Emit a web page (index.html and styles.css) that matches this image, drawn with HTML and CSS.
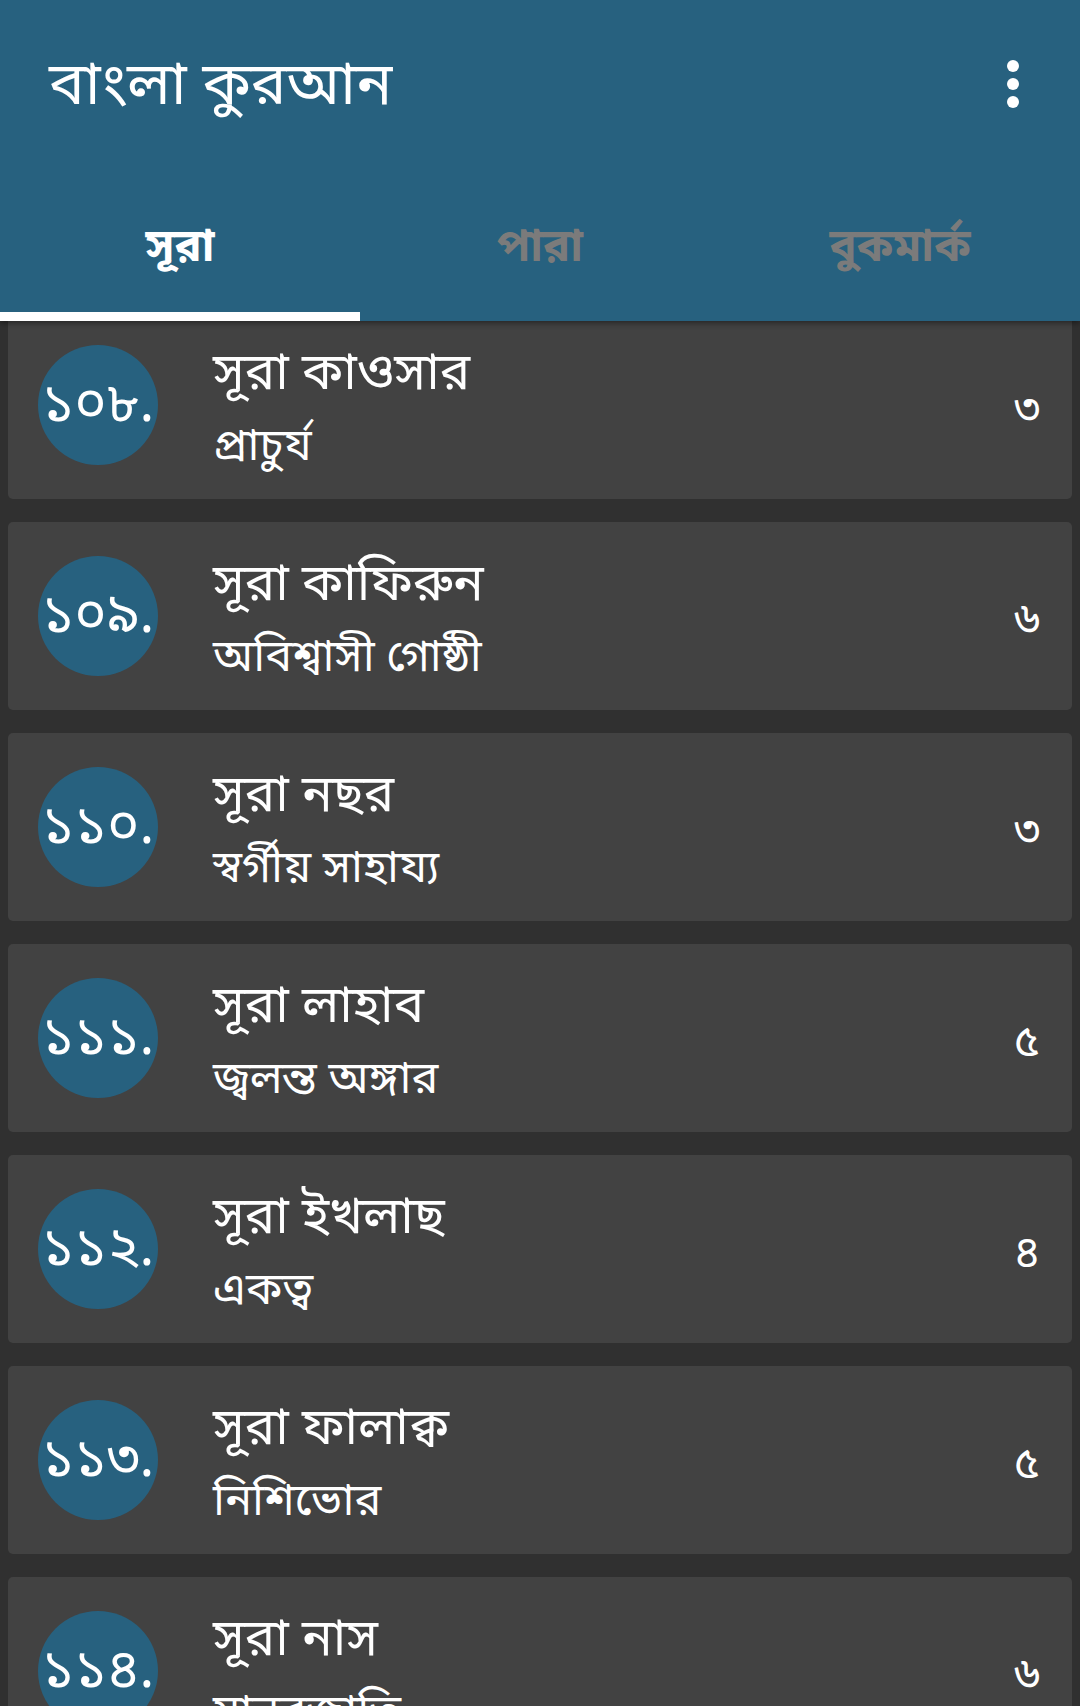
FILE: index.html
```html
<!DOCTYPE html>
<html lang="bn">
<head>
<meta charset="utf-8">
<title>বাংলা কুরআন</title>
<link rel="stylesheet" href="styles.css">
</head>
<body>
<div class="app">
  <header class="appbar">
    <div class="toolbar">
      <h1 class="title">বাংলা কুরআন</h1>
      <div class="menu" aria-label="menu">
        <span class="dot"></span><span class="dot"></span><span class="dot"></span>
      </div>
    </div>
    <nav class="tabs">
      <div class="tab active">সূরা</div>
      <div class="tab">পারা</div>
      <div class="tab">বুকমার্ক</div>
    </nav>
  </header>
  <main class="list">
    <div class="list-inner">
      <div class="card">
        <div class="num">১০৮.</div>
        <div class="texts"><div class="name">সূরা কাওসার</div><div class="meaning">প্রাচুর্য</div></div>
        <div class="count">৩</div>
      </div>
      <div class="card">
        <div class="num">১০৯.</div>
        <div class="texts"><div class="name">সূরা কাফিরুন</div><div class="meaning">অবিশ্বাসী গোষ্ঠী</div></div>
        <div class="count">৬</div>
      </div>
      <div class="card">
        <div class="num">১১০.</div>
        <div class="texts"><div class="name">সূরা নছর</div><div class="meaning">স্বর্গীয় সাহায্য</div></div>
        <div class="count">৩</div>
      </div>
      <div class="card">
        <div class="num">১১১.</div>
        <div class="texts"><div class="name">সূরা লাহাব</div><div class="meaning">জ্বলন্ত অঙ্গার</div></div>
        <div class="count">৫</div>
      </div>
      <div class="card">
        <div class="num">১১২.</div>
        <div class="texts"><div class="name">সূরা ইখলাছ</div><div class="meaning">একত্ব</div></div>
        <div class="count">৪</div>
      </div>
      <div class="card">
        <div class="num">১১৩.</div>
        <div class="texts"><div class="name">সূরা ফালাক্ব</div><div class="meaning">নিশিভোর</div></div>
        <div class="count">৫</div>
      </div>
      <div class="card">
        <div class="num">১১৪.</div>
        <div class="texts"><div class="name">সূরা নাস</div><div class="meaning">মানবজাতি</div></div>
        <div class="count">৬</div>
      </div>
    </div>
  </main>
</div>
</body>
</html>
```
FILE: styles.css
```css
* { box-sizing: border-box; }
html, body {
  margin: 0;
  padding: 0;
}
body {
  width: 1080px;
  height: 1706px;
  overflow: hidden;
  background: #303030;
  font-family: "Noto Sans Bengali", "Noto Sans", "Lohit Bengali", "FreeSans", sans-serif;
  color: #ffffff;
}
.app {
  display: flex;
  flex-direction: column;
  height: 1706px;
}
.appbar {
  background: #27617f;
  position: relative;
  z-index: 2;
  box-shadow: 0 2px 6px rgba(0,0,0,0.45);
  flex: none;
}
.toolbar {
  height: 177px;
  display: flex;
  align-items: center;
  justify-content: space-between;
  padding: 0 0 0 49px;
}
.title {
  margin: 0;
  font-size: 60px;
  font-weight: 400;
  line-height: 1;
}
.menu {
  width: 134px;
  display: flex;
  flex-direction: column;
  align-items: center;
  gap: 6px;
  margin-bottom: 9px;
}
.dot {
  width: 12px;
  height: 12px;
  border-radius: 50%;
  background: #ffffff;
}
.tabs {
  display: grid;
  grid-template-columns: repeat(3, 1fr);
  height: 144px;
}
.tab {
  display: flex;
  align-items: center;
  justify-content: center;
  font-size: 45px;
  font-weight: 700;
  color: #7b7b7b;
  border-bottom: 9px solid transparent;
  padding-top: 9px;
}
.tab.active {
  color: #ffffff;
  border-bottom-color: #ffffff;
}
.list {
  flex: 1;
  overflow: hidden;
  position: relative;
  z-index: 1;
}
.list-inner {
  display: flex;
  flex-direction: column;
  gap: 23px;
  padding: 0 8px;
  margin-top: -10px;
}
.card {
  flex: none;
  height: 188px;
  background: #424242;
  border-radius: 5px;
  display: flex;
  align-items: center;
  padding: 0 32px 0 30px;
}
.num {
  flex: none;
  width: 120px;
  height: 120px;
  border-radius: 50%;
  background: #27617f;
  display: flex;
  align-items: center;
  justify-content: center;
  font-size: 55px;
  line-height: 1;
  padding-top: 4px;
  white-space: nowrap;
}
.texts {
  flex: 1;
  margin-left: 55px;
  display: flex;
  flex-direction: column;
  gap: 10px;
  padding-top: 12px;
}
.name {
  font-size: 51px;
  line-height: 66px;
}
.meaning {
  font-size: 45px;
  line-height: 60px;
}
.count {
  flex: none;
  font-size: 44px;
  line-height: 1;
  padding-top: 14px;
}
```
